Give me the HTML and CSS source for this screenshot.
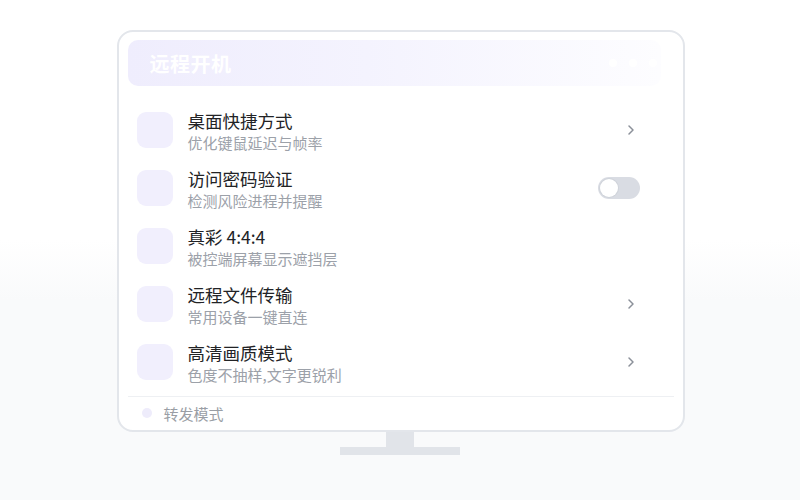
FILE: index.html
```html
<!DOCTYPE html>
<html lang="zh-CN">
<head>
<meta charset="utf-8">
<title>远程开机</title>
<link rel="stylesheet" href="styles.css">
</head>
<body>
<div class="stage">
  <div class="monitor">
    <div class="header">
      <span class="header-title">远程开机</span>
      <span class="dots"><i></i><i></i><i></i></span>
    </div>
    <div class="list">
      <div class="row">
        <div class="icon"></div>
        <div class="text"><div class="title">桌面快捷方式</div><div class="sub">优化键鼠延迟与帧率</div></div>
        <svg class="chev" width="8" height="12" viewBox="0 0 8 12"><path d="M2 2 L6 6 L2 10" fill="none" stroke="#8b9099" stroke-width="1.5" stroke-linecap="round" stroke-linejoin="round"/></svg>
      </div>
      <div class="row">
        <div class="icon"></div>
        <div class="text"><div class="title">访问密码验证</div><div class="sub">检测风险进程并提醒</div></div>
        <div class="toggle"><span class="knob"></span></div>
      </div>
      <div class="row">
        <div class="icon"></div>
        <div class="text"><div class="title">真彩 4:4:4</div><div class="sub">被控端屏幕显示遮挡层</div></div>
      </div>
      <div class="row">
        <div class="icon"></div>
        <div class="text"><div class="title">远程文件传输</div><div class="sub">常用设备一键直连</div></div>
        <svg class="chev" width="8" height="12" viewBox="0 0 8 12"><path d="M2 2 L6 6 L2 10" fill="none" stroke="#8b9099" stroke-width="1.5" stroke-linecap="round" stroke-linejoin="round"/></svg>
      </div>
      <div class="row">
        <div class="icon"></div>
        <div class="text"><div class="title">高清画质模式</div><div class="sub">色度不抽样,文字更锐利</div></div>
        <svg class="chev" width="8" height="12" viewBox="0 0 8 12"><path d="M2 2 L6 6 L2 10" fill="none" stroke="#8b9099" stroke-width="1.5" stroke-linecap="round" stroke-linejoin="round"/></svg>
      </div>
    </div>
    <div class="footer">
      <span class="fdot"></span>
      <span class="ftext">转发模式</span>
    </div>
  </div>
  <div class="neck"></div>
  <div class="base"></div>
</div>
</body>
</html>
```
FILE: styles.css
```css
* { box-sizing: border-box; }
html, body { margin: 0; padding: 0; }
body {
  width: 800px;
  height: 500px;
  overflow: hidden;
  font-family: "Noto Sans CJK SC", "Noto Sans", sans-serif;
  background: linear-gradient(to bottom, #ffffff 0, #ffffff 240px, #f9fafb 300px, #f9fafb 100%);
}
.stage {
  display: flex;
  flex-direction: column;
  align-items: center;
  padding-top: 30px;
}
.monitor {
  width: 568px;
  height: 402px;
  margin-left: 1px;
  background: #ffffff;
  border: 2px solid #e3e6eb;
  border-radius: 16px;
  padding: 8px 9px 0 9px;
  display: flex;
  flex-direction: column;
}
.header {
  height: 46px;
  margin-right: 13px;
  border-radius: 10px;
  background: linear-gradient(to right, #efedfd 0%, #f4f3fe 45%, #fdfdff 100%);
  display: flex;
  align-items: center;
  justify-content: space-between;
  padding: 0 4px 0 22px;
}
.header-title {
  color: #ffffff;
  font-size: 20px;
  font-weight: 700;
  letter-spacing: 0.5px;
}
.dots { display: flex; gap: 12px; }
.dots i {
  display: block;
  width: 8px;
  height: 8px;
  border-radius: 50%;
  background: #ffffff;
}
.list {
  margin-top: 15px;
  display: flex;
  flex-direction: column;
}
.row {
  height: 58px;
  display: flex;
  align-items: center;
  padding: 0 34px 0 9px;
}
.icon {
  width: 36px;
  height: 36px;
  border-radius: 9px;
  background: #f1effd;
  flex: none;
}
.text {
  flex: 1;
  margin-left: 15px;
  margin-top: 3px;
}
.title {
  font-size: 17.5px;
  line-height: 22px;
  color: #222326;
}
.sub {
  font-size: 15px;
  line-height: 21px;
  color: #9ca1a9;
}
.chev { margin-right: 5px; }
.toggle {
  width: 42px;
  height: 22px;
  border-radius: 11px;
  background: #d9dce3;
  padding: 2px;
}
.knob {
  display: block;
  width: 18px;
  height: 18px;
  border-radius: 50%;
  background: #ffffff;
  box-shadow: 0 0 0 1px #cfd3da;
}
.footer {
  margin-top: 5px;
  border-top: 1px solid #eef0f3;
  height: 33px;
  display: flex;
  align-items: center;
  padding-left: 14px;
}
.fdot {
  width: 10px;
  height: 10px;
  border-radius: 50%;
  background: #eeecfb;
}
.ftext {
  margin-left: 12px;
  font-size: 15px;
  color: #9a9ea5;
}
.neck {
  width: 28px;
  height: 15px;
  background: #e1e4e9;
}
.base {
  width: 120px;
  height: 8px;
  background: #e1e4e9;
}
```
